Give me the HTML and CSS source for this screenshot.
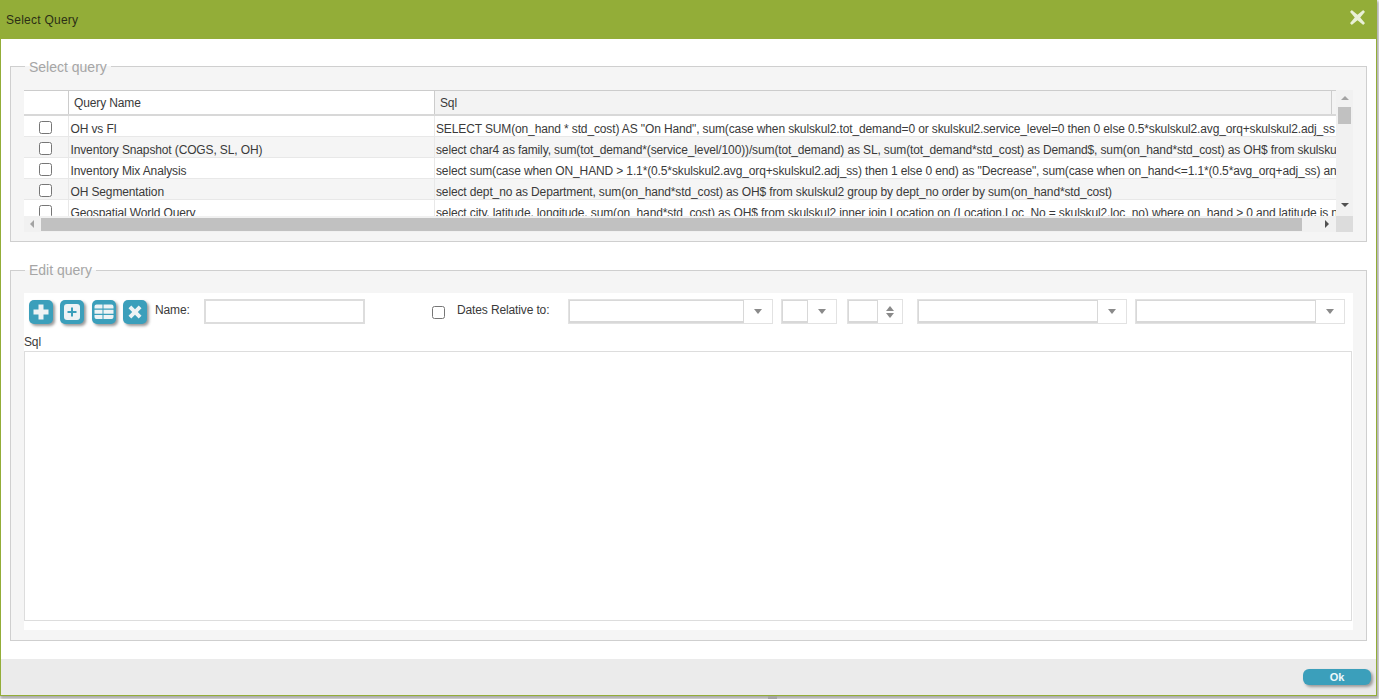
FILE: index.html
```html
<!DOCTYPE html>
<html lang="en">
<head>
<meta charset="utf-8">
<title>Select Query</title>
<link rel="stylesheet" href="styles.css">
</head>
<body>
<div class="dialog">
  <header class="titlebar">
    <span class="title">Select Query</span>
    <svg class="close" viewBox="0 0 18 18" width="17" height="17"><path d="M3.200 1.200 9 6.100 14.800 1.200Q15 1 15.200 1.200L16.800 2.800Q17 3 16.800 3.200L11.900 9 16.800 14.800Q17 15 16.800 15.200L15.200 16.800Q15 17 14.800 16.800L9 11.900 3.200 16.800Q3 17 2.800 16.800L1.200 15.200Q1 15 1.200 14.800L6.100 9 1.200 3.200Q1 3 1.200 2.800L2.800 1.200Q3 1 3.200 1.200Z"/></svg>
  </header>
  <main class="content">
    <fieldset class="group group-select">
      <legend>Select query</legend>
      <div class="grid">
        <div class="grid-main">
          <div class="grid-left">
            <div class="grid-head">
              <div class="hcell c-check"></div>
              <div class="hcell c-name">Query Name</div>
              <div class="hcell c-sql">Sql</div>
            </div>
            <div class="grid-body">
              <div class="row"><div class="cell c-check"><input type="checkbox"></div><div class="cell c-name">OH vs FI</div><div class="cell c-sql">SELECT SUM(on_hand * std_cost) AS "On Hand", sum(case when skulskul2.tot_demand=0 or skulskul2.service_level=0 then 0 else 0.5*skulskul2.avg_orq+skulskul2.adj_ss end) as "FI"</div></div>
              <div class="row alt"><div class="cell c-check"><input type="checkbox"></div><div class="cell c-name">Inventory Snapshot (COGS, SL, OH)</div><div class="cell c-sql">select char4 as family, sum(tot_demand*(service_level/100))/sum(tot_demand) as SL, sum(tot_demand*std_cost) as Demand$, sum(on_hand*std_cost) as OH$ from skulskul2 group by char4</div></div>
              <div class="row"><div class="cell c-check"><input type="checkbox"></div><div class="cell c-name">Inventory Mix Analysis</div><div class="cell c-sql">select sum(case when ON_HAND &gt; 1.1*(0.5*skulskul2.avg_orq+skulskul2.adj_ss) then 1 else 0 end) as "Decrease", sum(case when on_hand&lt;=1.1*(0.5*avg_orq+adj_ss) and on_hand &gt; 0 then 1 else 0 end)</div></div>
              <div class="row alt"><div class="cell c-check"><input type="checkbox"></div><div class="cell c-name">OH Segmentation</div><div class="cell c-sql">select dept_no as Department, sum(on_hand*std_cost) as OH$ from skulskul2 group by dept_no order by sum(on_hand*std_cost)</div></div>
              <div class="row"><div class="cell c-check"><input type="checkbox"></div><div class="cell c-name">Geospatial World Query</div><div class="cell c-sql">select city, latitude, longitude, sum(on_hand*std_cost) as OH$ from skulskul2 inner join Location on (Location.Loc_No = skulskul2.loc_no) where on_hand &gt; 0 and latitude is not null</div></div>
            </div>
          </div>
          <div class="vscroll">
            <span class="tri tri-up"></span>
            <span class="vthumb"></span>
            <span class="tri tri-down"></span>
          </div>
        </div>
        <div class="hscroll">
          <div class="htrack">
            <span class="tri tri-left"></span>
            <span class="hthumb"></span>
            <span class="tri tri-right"></span>
          </div>
          <div class="corner"></div>
        </div>
      </div>
    </fieldset>

    <fieldset class="group group-edit">
      <legend>Edit query</legend>
      <div class="panel">
        <div class="toolbar">
          <button class="icon-btn" type="button" aria-label="Add"><svg viewBox="0 0 24 24" width="24" height="24"><path class="w" d="M9.500 4.500h5v5h5v5h-5v5h-5v-5h-5v-5h5z"/></svg></button>
          <button class="icon-btn icon-wide" type="button" aria-label="Add item"><svg viewBox="0 0 24 24" width="24" height="24"><rect class="w" x="4" y="4" width="16" height="16" rx="3"/><path class="b" d="M11 7.500h2v3.500h3.500v2h-3.500v3.500h-2v-3.500h-3.500v-2h3.500z"/></svg></button>
          <button class="icon-btn" type="button" aria-label="Table"><svg viewBox="0 0 24 24" width="24" height="24"><path class="w" d="M2.500 6.500a2 2 0 0 1 2-2h6v4h-8zM11.500 4.500h8a2 2 0 0 1 2 2v2h-10zM2.500 9.700h8v4h-8zM11.500 9.700h10v4h-10zM2.500 15h8v4h-6a2 2 0 0 1-2-2zM11.500 15h10v2a2 2 0 0 1-2 2h-8z"/></svg></button>
          <button class="icon-btn" type="button" aria-label="Delete"><svg viewBox="0 0 24 24" width="24" height="24"><path class="w" d="M8.300 5.500 12 9.200 15.700 5.500 18.500 8.300 14.800 12 18.500 15.700 15.700 18.500 12 14.800 8.300 18.500 5.500 15.700 9.200 12 5.500 8.300z"/></svg></button>
          <label class="lbl lbl-name">Name:</label>
          <input class="name-input" type="text">
          <input class="dates-check" type="checkbox">
          <label class="lbl lbl-dates">Dates Relative to:</label>
          <div class="combo w-a"><span class="combo-field"></span><span class="combo-btn"><span class="tri tri-grey"></span></span></div>
          <div class="combo w-b"><span class="combo-field"></span><span class="combo-btn"><span class="tri tri-grey"></span></span></div>
          <div class="combo w-c"><span class="combo-field"></span><span class="combo-btn spin"><span class="tri tri-spin-up"></span><span class="tri tri-grey"></span></span></div>
          <div class="combo w-d"><span class="combo-field"></span><span class="combo-btn"><span class="tri tri-grey"></span></span></div>
          <div class="combo w-e"><span class="combo-field"></span><span class="combo-btn"><span class="tri tri-grey"></span></span></div>
        </div>
        <div class="sql-label">Sql</div>
        <div class="sql-box"></div>
      </div>
    </fieldset>
  </main>
  <footer class="footer">
    <button class="ok" type="button">Ok</button>
  </footer>
</div>
<div class="behind"></div>
</body>
</html>
```

FILE: styles.css
```css
html, body {
  margin: 0;
  height: 699px;
  overflow: hidden;
  background: #fff;
  font-family: "Liberation Sans", Arial, sans-serif;
  font-size: 12px;
  color: #3a3a3a;
}
.dialog {
  width: 1377px;
  height: 696px;
  box-sizing: border-box;
  border: 1px solid #93ad38;
  border-top: 0;
  display: flex;
  flex-direction: column;
  background: #fff;
  box-shadow: 1px 2px 3px 1px #aaa;
}
.behind { width: 9px; height: 3px; margin-left: 768px; background: #a4a4a4; }
.titlebar {
  height: 39px;
  margin: 0 -1px;
  flex: none;
  background: #93ad38;
  display: flex;
  align-items: center;
  justify-content: space-between;
  padding: 0 11px 0 6px;
}
.title { color: #2b2f16; font-size: 12px; letter-spacing: 0.25px; }
.close { fill: #e9f0d7; margin-top: -5px; }
.content {
  flex: 1;
  padding: 19px 9px 0;
  display: flex;
  flex-direction: column;
}
.group {
  margin: 0;
  border: 1px solid #cfcfcf;
  background: #f5f5f5;
  padding: 0 13px;
  min-width: 0;
  display: block;
}
.group legend {
  margin-left: 1px;
  padding: 0 4px;
  font-size: 14px;
  line-height: 16px;
  color: #a6a6a6;
}
.group-select legend { height: 16px; line-height: 18px; }
.group-select { height: 184px; box-sizing: border-box; padding-top: 16px; }
.group-edit { margin-top: 20px; height: 379px; box-sizing: border-box; padding-top: 15px; }

.grid { display: flex; flex-direction: column; }
.grid-main { display: flex; height: 126px; }
.grid-left { width: 1312px; display: flex; flex-direction: column; }
.grid-head { display: flex; height: 26px; box-sizing: border-box; border-top: 1px solid #ccc; border-bottom: 2px solid #d8d8d8; background: #f3f3f3; flex: none; }
.hcell { line-height: 24px; box-sizing: border-box; height: 23px; letter-spacing: -0.13px; }
.hcell.c-check { background: #fff; }
.hcell.c-name { background: #fff; padding-left: 5px; border-left: 1px solid #ccc; }
.hcell.c-sql { padding-left: 5px; border-left: 1px solid #ccc; border-right: 1px solid #ccc; width: 898px; }
.c-check { width: 44px; flex: none; }
.c-name { width: 366px; flex: none; }
.c-sql { flex: none; }
.grid-body { flex: 1; overflow: hidden; }
.row { display: flex; height: 21px; box-sizing: border-box; border-bottom: 1px solid #e8e8e8; background: #fff; }
.row.alt { background: #f5f5f5; }
.cell { line-height: 26px; height: 20px; white-space: nowrap; overflow: hidden; letter-spacing: -0.13px; }
.cell.c-check { display: flex; justify-content: center; align-items: flex-start; box-sizing: border-box; padding-right: 1px; }
.cell.c-check input { margin: 5px 0 0 0; width: 13px; height: 13px; }
.cell.c-name { padding-left: 1.5px; box-sizing: border-box; border-left: 1px solid #e8e8e8; }
.cell.c-sql { width: 902px; padding-left: 1px; box-sizing: border-box; border-left: 1px solid #e8e8e8; }

.vscroll {
  width: 17px;
  background: #f1f1f1;
  display: flex;
  flex-direction: column;
  align-items: center;
}
.vthumb { width: 13px; height: 17px; background: #c1c1c1; margin-top: 7px; flex: none; }
.tri { display: block; width: 0; height: 0; border-style: solid; border-color: transparent; flex: none; }
.tri-up { margin-top: 6px; border-width: 0 4px 4px; border-bottom-color: #a3a3a3; }
.tri-down { margin-top: 79px; border-width: 4px 4px 0; border-top-color: #505050; }
.hscroll { display: flex; height: 16px; }
.htrack { width: 1312px; background: #f1f1f1; display: flex; align-items: center; }
.tri-left { margin-left: 6px; border-width: 4px 4px 4px 0; border-right-color: #a3a3a3; }
.hthumb { width: 1261px; height: 13px; background: #c1c1c1; margin-left: 7px; }
.tri-right { margin-left: 23px; border-width: 4px 0 4px 4px; border-left-color: #505050; }
.corner { width: 17px; background: #dcdcdc; }

.panel { background: #fff; height: 337px; display: flex; flex-direction: column; }
.toolbar { display: flex; align-items: flex-start; height: 43px; flex: none; padding-top: 6px; box-sizing: border-box; }
.icon-btn {
  width: 24px;
  height: 24px;
  padding: 0;
  border: 0;
  border-radius: 5px;
  background: #3b9fbb;
  box-shadow: 2px 2px 3px #999;
  margin: 1px 7px 0 0;
  flex: none;
}
.icon-btn:first-child { margin-left: 5px; }
.icon-wide { margin-right: 8px; }
.icon-btn svg { display: block; }
.w { fill: #eef3f5; }
.b { fill: #3b9fbb; }
.lbl { line-height: 22px; flex: none; letter-spacing: -0.13px; }
.lbl-name { margin-left: 1px; width: 49px; }
.name-input {
  width: 161px;
  height: 25px;
  box-sizing: border-box;
  border: 2px solid #ddd;
  padding: 0;
  margin: 0;
  background: #fff;
  flex: none;
}
.dates-check { margin: 7px 0 0 67px; width: 13px; height: 13px; flex: none; }
.lbl-dates { margin-left: 12px; width: 111px; }
.combo {
  height: 25px;
  box-sizing: border-box;
  border: 1px solid #e2e2e2;
  display: flex;
  flex: none;
}
.combo-field { flex: 1; border: 1px solid #d8d8d8; border-bottom-width: 2px; background: #fff; }
.combo-btn { width: 28px; display: flex; align-items: center; justify-content: center; flex-direction: column; gap: 2px; background: #fff; }
.tri-grey { border-width: 5px 4px 0; border-top-color: #8a8a8a; }
.tri-spin-up { border-width: 0 4px 5px; border-bottom-color: #8a8a8a; }
.w-a { width: 205px; }
.w-b { width: 56px; margin-left: 8px; }
.w-c { width: 56px; margin-left: 10px; }
.w-c .combo-btn { width: 24px; }
.w-d { width: 210px; margin-left: 14px; }
.w-e { width: 210px; margin-left: 8px; }
.sql-label { height: 15px; line-height: 12px; flex: none; letter-spacing: -0.13px; }
.sql-box { width: 1328px; height: 270px; box-sizing: border-box; border: 1px solid #ddd; background: #fff; flex: none; }

.footer {
  height: 36px;
  flex: none;
  background: #ebebeb;
  display: flex;
  justify-content: flex-end;
  align-items: flex-start;
  padding: 10px 5px 0 0;
  box-sizing: border-box;
}
.ok {
  width: 68px;
  height: 16px;
  padding: 0;
  border: 0;
  border-radius: 6px;
  background: #3b9fbb;
  color: #eef8fb;
  font: bold 11px "Liberation Sans", Arial, sans-serif;
  box-shadow: 2px 2px 3px #999;
}
```
